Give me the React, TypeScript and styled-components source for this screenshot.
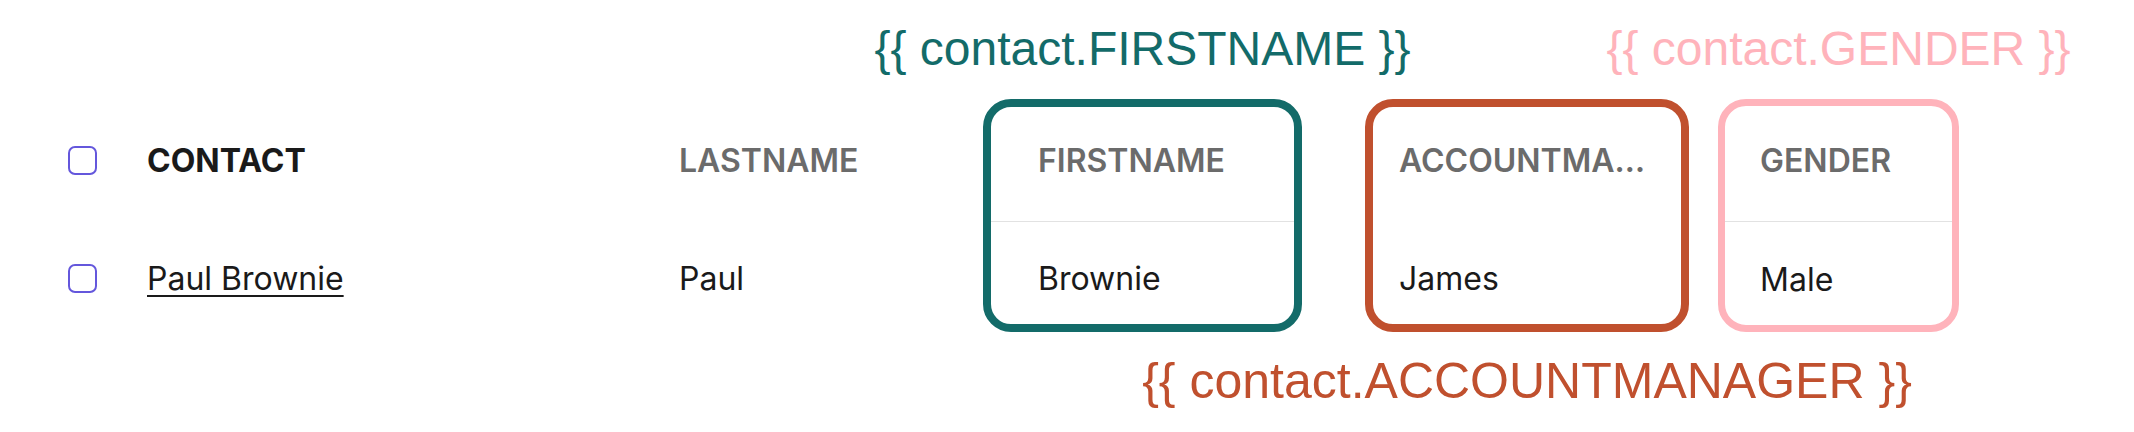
import styled, { createGlobalStyle } from 'styled-components';

type ColumnSpec = {
	header: string;
	value: string;
	width: number;
	inset: number;
	offset?: number;
	color?: string;
	borderWidth?: number;
	divider?: boolean;
	topLabel?: string;
	bottomLabel?: string;
	labelSize?: number;
	strong?: boolean;
	link?: boolean;
	checkbox?: boolean;
};

const columns: ColumnSpec[] = [
	{ header: '', value: '', width: 79, inset: 0, checkbox: true },
	{ header: 'CONTACT', value: 'Paul Brownie', width: 532, inset: 0, strong: true, link: true },
	{ header: 'LASTNAME', value: 'Paul', width: 304, inset: 0 },
	{
		header: 'FIRSTNAME', value: 'Brownie', width: 319, inset: 47,
		color: '#136b69', borderWidth: 8, divider: true, topLabel: '{{ contact.FIRSTNAME }}',
	},
	{
		header: 'ACCOUNTMANAGER', value: 'James', width: 324, inset: 26, offset: 63,
		color: '#c0502e', borderWidth: 8, bottomLabel: '{{ contact.ACCOUNTMANAGER }}', labelSize: 50,
	},
	{
		header: 'GENDER', value: 'Male', width: 241, inset: 35, offset: 29,
		color: '#ffb3bb', borderWidth: 7, divider: true, topLabel: '{{ contact.GENDER }}',
	},
];

const GlobalStyle = createGlobalStyle`
	html, body {
		margin: 0;
		padding: 0;
		background: #ffffff;
	}
	body {
		font-family: Inter, "Noto Sans", sans-serif;
		color: #1a1a1a;
	}
`;

const Page = styled.div`
	display: flex;
	align-items: flex-start;
	padding: 21px 0 0 68px;
	height: 432px;
	box-sizing: border-box;
	overflow: hidden;
`;

const Column = styled.div<{ $width: number; $offset: number }>`
	display: flex;
	flex-direction: column;
	align-items: center;
	flex: 0 0 ${(p) => p.$width}px;
	width: ${(p) => p.$width}px;
	margin-left: ${(p) => p.$offset}px;
`;

const Label = styled.div<{ $color?: string; $size?: number }>`
	height: 56px;
	line-height: 56px;
	white-space: nowrap;
	font-family: "Liberation Sans", Arial, sans-serif;
	font-size: ${(p) => p.$size || 48}px;
	color: ${(p) => p.$color || 'transparent'};
`;

const TopLabel = styled(Label)`
	margin-bottom: 22px;
`;

const BottomLabel = styled(Label)`
	margin-top: 21px;
`;

const Box = styled.div<{ $color?: string; $border: number; $inset: number }>`
	width: 100%;
	height: 233px;
	box-sizing: border-box;
	border-style: solid;
	border-color: ${(p) => p.$color || 'transparent'};
	border-width: ${(p) => (p.$color ? `${p.$border}px` : `${p.$border}px 0`)};
	border-radius: 28px;
	padding: 0 32px 0 ${(p) => p.$inset}px;
	display: flex;
	flex-direction: column;
	overflow: hidden;
`;

const HeaderCell = styled.div<{ $divider?: boolean; $strong?: boolean; $border: number }>`
	height: ${(p) => 123 - p.$border}px;
	box-sizing: border-box;
	display: flex;
	align-items: center;
	padding-bottom: 7px;
	margin: 0 -32px 0 -200px;
	padding-left: 200px;
	padding-right: 32px;
	border-bottom: 1px solid ${(p) => (p.$divider ? '#e2e2e2' : 'transparent')};
	font-size: 32px;
	font-weight: ${(p) => (p.$strong ? 700 : 600)};
	color: ${(p) => (p.$strong ? '#1a1a1a' : '#6b6b6b')};
`;

const HeaderText = styled.span`
	display: block;
	min-width: 0;
	white-space: nowrap;
	overflow: hidden;
	text-overflow: ellipsis;
`;

const BodyCell = styled.div`
	flex: 1;
	display: flex;
	align-items: center;
	padding-top: 11px;
	font-size: 32px;
	font-weight: 400;
	color: #1a1a1a;
	white-space: nowrap;
`;

const NameLink = styled.a`
	color: #1a1a1a;
	text-decoration: underline;
	text-decoration-thickness: 2px;
	text-underline-offset: 5px;
`;

const Checkbox = styled.span`
	display: block;
	width: 29px;
	height: 29px;
	box-sizing: border-box;
	border: 2.5px solid #6457dc;
	border-radius: 7px;
`;

export default function App() {
	return (
		<>
			<GlobalStyle />
			<Page>
				{columns.map((col) => {
					const border = col.borderWidth || 8;
					return (
						<Column key={col.header || 'select'} $width={col.width} $offset={col.offset || 0}>
							<TopLabel $color={col.color} $size={col.labelSize}>{col.topLabel || '\u00a0'}</TopLabel>
							<Box $color={col.color} $border={border} $inset={col.inset}>
								<HeaderCell $divider={col.divider} $strong={col.strong} $border={border}>
									{col.checkbox ? <Checkbox /> : <HeaderText>{col.header}</HeaderText>}
								</HeaderCell>
								<BodyCell>
									{col.checkbox ? (
										<Checkbox />
									) : col.link ? (
										<NameLink href="#">{col.value}</NameLink>
									) : (
										col.value
									)}
								</BodyCell>
							</Box>
							<BottomLabel $color={col.color} $size={col.labelSize}>{col.bottomLabel || '\u00a0'}</BottomLabel>
						</Column>
					);
				})}
			</Page>
		</>
	);
}
